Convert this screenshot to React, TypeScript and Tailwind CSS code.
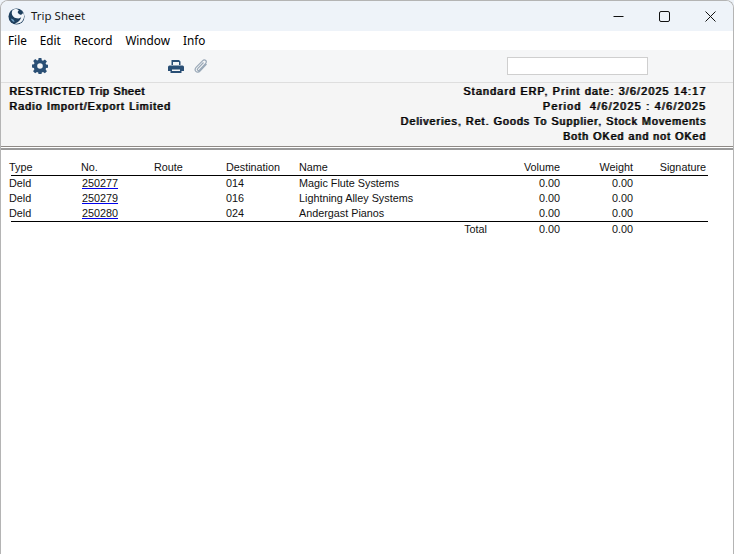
const rows = [
  { type: "Deld", no: "250277", dest: "014", name: "Magic Flute Systems" },
  { type: "Deld", no: "250279", dest: "016", name: "Lightning Alley Systems" },
  { type: "Deld", no: "250280", dest: "024", name: "Andergast Pianos" },
];

const cols = "grid grid-cols-[72px_73px_72px_73px_188px_73px_73px_73px] pl-[8px]";

const Logo = () => (
  <svg width="17" height="17" viewBox="0 0 18 18">
    <circle cx="9" cy="9" r="8.500" fill="#1d3f5e" />
    <path d="M5 2C3 5 4 9 8 10.500c3 1 5 .5 6-1-.5 3-3 6-7 7 6 1 10-3 10-8 0-1.500-.5-3-1.200-4 .2 2-1.800 3-3.300 2.300C10 6 9.500 4 11.500 2.500 9.500.5 7 .5 5 2z" fill="#f2f6fa" />
    <path d="M3 11c2 .5 3.500 1.500 4 3.500-1.500.5-3-1-4-3.500z" fill="#6d9cc0" />
  </svg>
);

const Gear = () => (
  <svg width="16" height="16" viewBox="0 0 16 16">
    <path
      fillRule="evenodd"
      fill="#2a4f75"
      d="M6.600 0h2.800l.4 2.200 1.200.5L12.900 1.400l2 2-1.300 1.900.5 1.200 2.200.4v2.800l-2.200.4-.5 1.200 1.300 1.900-2 2-1.900-1.300-1.200.5-.4 2.200H6.600l-.4-2.200-1.200-.5-1.900 1.300-2-2 1.300-1.900-.5-1.200L-.2 9.400V6.600l2.200-.4.500-1.200L1.200 3.100l2-2 1.900 1.300 1.200-.5zM8 5.200a2.800 2.800 0 1 0 0 5.600 2.800 2.800 0 0 0 0-5.600z"
    />
  </svg>
);

const Printer = () => (
  <svg width="16" height="13" viewBox="0 0 16 13">
    <path
      fill="#2a4f75"
      d="M3.500 0h7.500l1.500 1.500V5h-1.500V2H5v3H3.500zM1.500 5.500h13A1.500 1.500 0 0 1 16 7v4h-2.500v2h-11v-2H0V7a1.500 1.500 0 0 1 1.500-1.500zM4 9.500V11h8V9.500z"
    />
  </svg>
);

const Clip = () => (
  <svg width="14" height="15" viewBox="0 0 14 15" fill="none">
    <path
      d="M12.500 5 6 12c-1.300 1.400-3 1.500-4.100.4C.8 11.300 1 9.600 2.300 8.200L8.500 1.800c1-1 2.400-1.100 3.200-.3.800.8.700 2.100-.2 3.100L5.500 11c-.6.600-1.300.6-1.800.2-.5-.5-.4-1.200.2-1.800L9.500 3.500"
      stroke="#9aa9b8"
      strokeWidth="1.200"
    />
  </svg>
);

export default function App() {
  return (
    <div className="w-[734px] h-[554px] bg-[#eef3f9] font-['Liberation_Sans',sans-serif] text-[10.800px] text-black overflow-hidden">
      <div className="h-full flex flex-col border border-[#b4b4b4] border-b-0 rounded-t-lg bg-white overflow-hidden">
        {/* title bar */}
        <div className="h-[30px] shrink-0 bg-[#eef3f9] flex items-center pl-[7px]">
          <Logo />
          <span className="ml-[6px] text-[11.500px] text-[#1a1a1a] font-['Noto_Sans',sans-serif]">Trip Sheet</span>
          <div className="ml-auto flex items-center gap-[35px] pr-[17px]">
            <svg width="11" height="11" viewBox="0 0 11 11"><path d="M0.500 5.500h10" stroke="#111" /></svg>
            <svg width="11" height="11" viewBox="0 0 11 11" fill="none"><rect x="0.500" y="0.500" width="10" height="10" rx="1.500" stroke="#111" /></svg>
            <svg width="11" height="11" viewBox="0 0 11 11"><path d="M0.500 0.500l10 10M10.500 0.500l-10 10" stroke="#111" /></svg>
          </div>
        </div>
        {/* menu */}
        <div className="h-[19px] shrink-0 bg-white flex items-center pl-[7px] gap-[13px] text-[11.750px] font-['Noto_Sans',sans-serif]">
          <span>File</span>
          <span>Edit</span>
          <span>Record</span>
          <span>Window</span>
          <span>Info</span>
        </div>
        {/* toolbar */}
        <div className="h-[33px] shrink-0 bg-[#f5f6f7] border-b border-[#dedede] flex items-center">
          <div className="ml-[31px]"><Gear /></div>
          <div className="ml-[120px]"><Printer /></div>
          <div className="ml-[10px]"><Clip /></div>
          <div className="ml-[299px] w-[141px] h-[18px] bg-white border border-[#cfcfcf]" />
        </div>
        {/* report header: double struck like the original renderer */}
        <div className="h-[63px] shrink-0 bg-[#f5f5f5] flex justify-between pl-[8px] pr-[27px] pt-[1px] leading-[15px] text-[10.600px] [text-shadow:1px_0_0_#000]">
          <div>
            <div className="tracking-[0.800px]">RESTRICTED Trip Sheet</div>
            <div className="tracking-[1.130px]">Radio Import/Export Limited</div>
          </div>
          <div className="text-right">
            <div className="tracking-[1.220px]">Standard ERP, Print date: 3/6/2025 14:17</div>
            <div className="tracking-[1.320px]">Period&nbsp; 4/6/2025 : 4/6/2025</div>
            <div className="tracking-[1.070px]">Deliveries, Ret. Goods To Supplier, Stock Movements</div>
            <div className="tracking-[1.050px]">Both OKed and not OKed</div>
          </div>
        </div>
        <div className="h-[1px] shrink-0 bg-[#8f8a86]" />
        <div className="h-[1px] shrink-0 bg-white" />
        <div className="h-[2px] shrink-0 bg-[#9a9a9a]" />
        {/* table */}
        <div className="flex-1 bg-white pt-[10px] leading-[15px] text-[#111]">
          <div className={cols}>
            <span>Type</span>
            <span>No.</span>
            <span>Route</span>
            <span>Destination</span>
            <span>Name</span>
            <span className="text-right">Volume</span>
            <span className="text-right">Weight</span>
            <span className="text-right">Signature</span>
          </div>
          <div className="h-[1px] bg-black ml-[10px] w-[697px]" />
          {rows.map((r) => (
            <div key={r.no} className={cols}>
              <span>{r.type}</span>
              <a className="pl-[1px] underline decoration-[#0000ee]">{r.no}</a>
              <span />
              <span>{r.dest}</span>
              <span>{r.name}</span>
              <span className="text-right">0.00</span>
              <span className="text-right">0.00</span>
              <span />
            </div>
          ))}
          <div className="h-[1px] bg-black ml-[10px] w-[697px]" />
          <div className={cols}>
            <span />
            <span />
            <span />
            <span />
            <span className="text-right">Total</span>
            <span className="text-right">0.00</span>
            <span className="text-right">0.00</span>
            <span />
          </div>
        </div>
      </div>
    </div>
  );
}
